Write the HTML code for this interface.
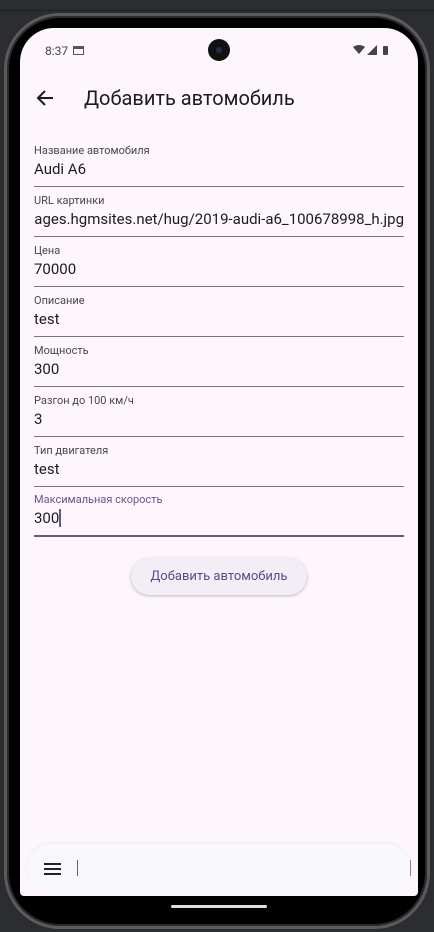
<!DOCTYPE html>
<html><head><meta charset="utf-8"><style>
*{margin:0;padding:0;box-sizing:border-box}
body{width:434px;height:932px;background:#2b2d30;position:relative;overflow:hidden;font-family:"Roboto","Liberation Sans","DejaVu Sans",sans-serif}
.top{position:absolute;left:0;top:0;width:434px;height:11px;background:#2b2d30;border-bottom:1px solid #1e1f22}
.phone{position:absolute;left:4px;top:13px;width:426px;height:916px;border-radius:56px;background:#000;border:3px solid #5a5b5e;box-shadow:inset 0 0 0 2px #2a2a2a}
.screen{position:absolute;left:20px;top:28px;width:398px;height:868px;background:#fdf7fd;border-radius:34px 34px 4px 4px;overflow:hidden}
.st{position:absolute;top:16px;font-size:12px;color:#444}
.cam{position:absolute;left:188px;top:11px;width:22px;height:22px;border-radius:50%;background:#111}
.title{position:absolute;left:64px;top:58px;font-size:20px;color:#1d1b20}
.f{position:absolute;left:14px;width:370px;height:43px;border-bottom:1px solid #7a757f}
.f .l{position:absolute;top:0;font-size:11px;color:#49454f}
.f .v{position:absolute;top:16px;font-size:15px;color:#1d1b20;white-space:nowrap}
.btn{position:absolute;left:111px;top:530px;width:176px;height:37px;border-radius:19px;background:#f3edf5;box-shadow:0 1px 3px rgba(0,0,0,.25);font-size:13px;color:#5b4a8a;text-align:center;line-height:37px}
.bar{position:absolute;left:7px;top:816px;width:384px;height:50px;border-radius:25px;background:#f8f7fc;box-shadow:0 -1px 4px rgba(0,0,0,.05)}
.home{position:absolute;left:171px;top:905px;width:96px;height:3px;border-radius:2px;background:#ddd}
</style></head><body>
<div class="top"></div>
<div class="phone"></div>
<div class="screen">
<div class="st" style="left:25px">8:37</div>
<div style="position:absolute;left:53px;top:18px;width:11px;height:9px;border:1.5px solid #555;border-top-width:3px"></div>
<div class="cam"><div style="position:absolute;left:8px;top:8px;width:6px;height:6px;border-radius:50%;background:#2a2a48"></div></div>
<svg style="position:absolute;left:333px;top:16px" width="40" height="12" viewBox="0 0 40 12"><path d="M0 3 Q6 -1 12 3 L6 10Z" fill="#444"/><path d="M14 11 L24 1 L24 11Z" fill="#444"/><rect x="30" y="2" width="5" height="9" rx="1" fill="#444"/></svg>
<svg style="position:absolute;left:16px;top:61px" width="18" height="18" viewBox="0 0 18 18"><path d="M17 9H2M9 2L2 9l7 7" stroke="#1d1b20" stroke-width="2" fill="none"/></svg>
<div class="title">Добавить автомобиль</div>
<div class="f" style="top:116px"><div class="l">Название автомобиля</div><div class="v">Audi A6</div></div>
<div class="f" style="top:166px;overflow:hidden"><div class="l">URL картинки</div><div class="v" style="right:0">ages.hgmsites.net/hug/2019-audi-a6_100678998_h.jpg</div></div>
<div class="f" style="top:216px"><div class="l">Цена</div><div class="v">70000</div></div>
<div class="f" style="top:266px"><div class="l">Описание</div><div class="v">test</div></div>
<div class="f" style="top:316px"><div class="l">Мощность</div><div class="v">300</div></div>
<div class="f" style="top:366px"><div class="l">Разгон до 100 км/ч</div><div class="v">3</div></div>
<div class="f" style="top:416px"><div class="l">Тип двигателя</div><div class="v">test</div></div>
<div class="f" style="top:465px;height:44px;border-bottom:2px solid #65558f"><div class="l" style="color:#65558f">Максимальная скорость</div><div class="v">300<span style="display:inline-block;width:1.5px;height:18px;background:#65558f;vertical-align:-4px"></span></div></div>
<div class="btn">Добавить автомобиль</div>
<div class="bar">
<div style="position:absolute;left:17px;top:19px;width:17px;height:2px;background:#222;box-shadow:0 5px 0 #222,0 10px 0 #222"></div>
<div style="position:absolute;left:50px;top:16px;width:1px;height:16px;background:#666"></div>
<div style="position:absolute;right:0;top:16px;width:1px;height:16px;background:#888"></div>
</div>
</div>
<div class="home"></div>
</body></html>
